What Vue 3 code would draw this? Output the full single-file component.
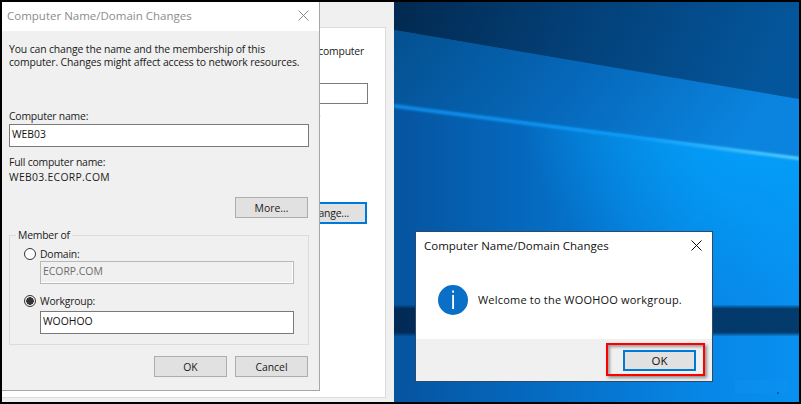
<script setup>
const title = 'Computer Name/Domain Changes'
</script>

<template>
  <div class="page">
    <div class="screen">
      <section class="behind">
        <div class="behind-panel">
          <p class="behind-text">computer</p>
          <div class="behind-input"></div>
          <span class="behind-dot">.</span>
          <button class="change-btn">Change...</button>
        </div>
      </section>

      <svg class="wall" viewBox="0 0 405 400" preserveAspectRatio="none" aria-hidden="true">
        <defs>
          <linearGradient id="gTop" x1="0" y1="0" x2="1" y2="0.1">
            <stop offset="0" stop-color="#02294f" />
            <stop offset="0.45" stop-color="#033f76" />
            <stop offset="1" stop-color="#04569c" />
          </linearGradient>
          <linearGradient id="gMid" x1="0" y1="0" x2="1" y2="0.25">
            <stop offset="0" stop-color="#04508f" />
            <stop offset="0.5" stop-color="#0667b9" />
            <stop offset="1" stop-color="#0a84de" />
          </linearGradient>
          <linearGradient id="gLow" x1="0" y1="0" x2="1" y2="0">
            <stop offset="0" stop-color="#05549f" />
            <stop offset="0.35" stop-color="#056ac0" />
            <stop offset="0.75" stop-color="#0786e6" />
            <stop offset="1" stop-color="#0890f0" />
          </linearGradient>
          <linearGradient id="gLine" x1="0" y1="0" x2="1" y2="0">
            <stop offset="0" stop-color="#1189e6" />
            <stop offset="0.6" stop-color="#0c9af8" />
            <stop offset="1" stop-color="#5fd0ff" />
          </linearGradient>
          <radialGradient id="gGlow" cx="0.85" cy="0.2" r="0.55">
            <stop offset="0" stop-color="#00a8ff" stop-opacity="0.9" />
            <stop offset="1" stop-color="#00a8ff" stop-opacity="0" />
          </radialGradient>
          <linearGradient id="gBand" x1="0" y1="0" x2="0" y2="1">
            <stop offset="0" stop-color="#011a3a" stop-opacity="0.1" />
            <stop offset="0.12" stop-color="#011a3a" stop-opacity="0.72" />
            <stop offset="0.88" stop-color="#011a3a" stop-opacity="0.72" />
            <stop offset="1" stop-color="#011a3a" stop-opacity="0.1" />
          </linearGradient>
          <filter id="soft"><feGaussianBlur stdDeviation="0.8" /></filter>
        </defs>
        <rect width="405" height="400" fill="url(#gLow)" />
        <rect width="405" height="400" fill="url(#gGlow)" />
        <polygon points="0,0 405,0 405,98 0,28" fill="url(#gTop)" />
        <polygon points="0,28 405,97 405,155 0,102" fill="url(#gMid)" />
        <polygon points="0,102 405,155 405,158 0,106" fill="url(#gLine)" filter="url(#soft)" />
        <rect x="0" y="303" width="405" height="31" fill="url(#gBand)" />
        <rect x="341" y="378" width="53" height="13" fill="#1a9af5" opacity="0.2" />
        <rect x="383" y="390" width="2" height="2" fill="#0a5ea8" />
      </svg>

      <section class="dialog-main">
        <header class="titlebar">
          <span class="title-muted">{{ title }}</span>
          <svg class="close" viewBox="0 0 11 11"><path d="M.5.5l10 10M10.500.5l-10 10" stroke="#8a8a8a" fill="none" /></svg>
        </header>
        <div class="main-body">
          <p class="intro">You can change the name and the membership of this<br />computer. Changes might affect access to network resources.</p>
          <label class="name-label">Computer name:</label>
          <div class="field name-field">WEB03</div>
          <p class="full-label">Full computer name:</p>
          <p class="full-value">WEB03.ECORP.COM</p>
          <div class="more-row"><button class="btn">More...</button></div>
          <fieldset class="group">
            <legend>Member of</legend>
            <div class="radio-row">
              <span class="radio"></span><span>Domain:</span>
            </div>
            <div class="field disabled">ECORP.COM</div>
            <div class="radio-row second">
              <span class="radio checked"></span><span>Workgroup:</span>
            </div>
            <div class="field">WOOHOO</div>
          </fieldset>
          <div class="actions">
            <button class="btn">OK</button>
            <button class="btn">Cancel</button>
          </div>
        </div>
      </section>

      <section class="dialog-msg">
        <header class="msg-title">
          <span>{{ title }}</span>
          <svg class="close" viewBox="0 0 11 11"><path d="M.5.5l10 10M10.500.5l-10 10" stroke="#111" fill="none" /></svg>
        </header>
        <div class="msg-body">
          <svg class="info" viewBox="0 0 30 30">
            <circle cx="15" cy="15" r="15" fill="#0a6fc6" />
            <rect x="14.200" y="5.500" width="1.800" height="2.200" fill="#fff" />
            <rect x="14.200" y="10" width="1.800" height="14" fill="#fff" />
          </svg>
          <span class="msg-text">Welcome to the WOOHOO workgroup.</span>
        </div>
        <footer class="msg-foot">
          <button class="btn primary">OK</button>
        </footer>
      </section>

      <div class="callout"></div>
    </div>
  </div>
</template>

<style>
html, body { margin: 0; background: #000; }
</style>

<style scoped>
.page {
  width: 801px;
  height: 404px;
  padding: 2px;
  box-sizing: border-box;
  background: #000;
  overflow: hidden;
}
.screen {
  position: relative;
  display: flex;
  width: 797px;
  height: 400px;
  overflow: hidden;
  font-family: "Open Sans", "Noto Sans", sans-serif;
  font-size: 10.400px;
  letter-spacing: -0.2px;
  color: #1a1a1a;
}
p { margin: 0; }
.behind {
  width: 392px;
  height: 100%;
  flex: none;
  background: #f0f0f0;
  padding: 25px 8px 4px 0;
  box-sizing: border-box;
}
.behind-panel {
  position: relative;
  height: 100%;
  box-sizing: border-box;
  background: #fff;
  border: 1px solid #dcdcdc;
  border-left: 0;
}
.behind-text {
  text-align: right;
  padding: 16px 21px 0 0;
  line-height: 15px;
}
.behind-input {
  height: 19px;
  margin: 24px 17px 0 200px;
  border: 1px solid #7a7a7a;
}
.behind-dot {
  display: block;
  margin: 3px 0 0 316px;
  line-height: 12px;
}
.change-btn {
  position: absolute;
  left: 286px;
  top: 174px;
  width: 79px;
  height: 22px;
  box-sizing: border-box;
  border: 2px solid #0078d7;
  background: #e1e1e1;
  font: inherit;
  letter-spacing: inherit;
  color: #1a1a1a;
  padding: 0;
}
.wall {
  flex: 1;
  height: 400px;
  display: block;
}
.dialog-main {
  position: absolute;
  left: 0;
  top: 0;
  width: 318px;
  height: 389px;
  box-sizing: border-box;
  background: #f0f0f0;
  border-right: 1px solid #a6a6a6;
  border-bottom: 1px solid #a6a6a6;
}
.titlebar {
  height: 29px;
  box-sizing: border-box;
  background: #fff;
  display: flex;
  align-items: center;
  justify-content: space-between;
  padding: 0 10px 2px 5px;
}
.title-muted {
  font-size: 11.500px;
  letter-spacing: 0;
  color: #8c8c8c;
}
.close { width: 11px; height: 11px; display: block; }
.main-body { padding: 12px 10px 0 7px; }
.intro { line-height: 13px; white-space: nowrap; letter-spacing: -0.12px; }
.name-label {
  display: block;
  margin-top: 40px;
  line-height: 15px;
}
.field {
  box-sizing: border-box;
  height: 23px;
  border: 1px solid #7a7a7a;
  background: #fff;
  padding-left: 2px;
  line-height: 19px;
  letter-spacing: 0;
  color: #111;
}
.full-label { margin-top: 8px; line-height: 15px; }
.full-value { line-height: 15px; letter-spacing: 0.3px; }
.more-row {
  display: flex;
  justify-content: flex-end;
  margin-top: 12px;
  padding-right: 1px;
}
.btn {
  width: 73px;
  height: 21px;
  box-sizing: border-box;
  border: 1px solid #adadad;
  background: #e1e1e1;
  font: inherit;
  letter-spacing: 0;
  color: #1a1a1a;
  padding: 0;
}
.group {
  margin: 11px 0 0;
  padding: 5px 14px 10px 12px;
  height: 116px;
  box-sizing: border-box;
  border: 1px solid #dcdcdc;
  min-width: 0;
}
.group legend {
  padding: 0 2px;
  margin-left: -6px;
  line-height: 13px;
}
.radio-row {
  display: flex;
  align-items: center;
  gap: 4px;
  height: 14px;
  margin-left: 2px;
}
.radio-row.second { margin-top: 10px; }
.radio {
  width: 12px;
  height: 12px;
  box-sizing: border-box;
  border: 1px solid #333;
  border-radius: 50%;
  background: #fff;
  flex: none;
}
.radio.checked {
  background: radial-gradient(circle, #333 0 3.500px, #f0f0f0 4px);
}
.field.disabled {
  border-color: #b9b9b9;
  background: #f0f0f0;
  color: #6d6d6d;
  box-shadow: inset -1px -1px 0 #fff;
}
.radio-row + .field { margin: 0 0 0 18px; }
.radio-row.second + .field { margin-top: 3px; }
.actions {
  display: flex;
  justify-content: flex-end;
  gap: 8px;
  margin-top: 11px;
  padding-right: 1px;
}
.dialog-msg {
  position: absolute;
  left: 413px;
  top: 229px;
  width: 298px;
  height: 151px;
  box-sizing: border-box;
  border: 1px solid #2e4a66;
  background: #fff;
  display: flex;
  flex-direction: column;
  letter-spacing: 0;
}
.msg-title {
  display: flex;
  align-items: center;
  justify-content: space-between;
  height: 28px;
  box-sizing: border-box;
  padding: 0 10px 2px 8px;
  font-size: 11.500px;
  color: #111;
}
.msg-body {
  flex: 1;
  display: flex;
  align-items: center;
  gap: 10px;
  padding-left: 22px;
  color: #111;
}
.info { width: 30px; height: 30px; flex: none; }
.msg-text { font-size: 11px; letter-spacing: 0.2px; }
.msg-foot {
  height: 42px;
  background: #f0f0f0;
  display: flex;
  justify-content: flex-end;
  padding: 11px 16px 0 0;
  box-sizing: border-box;
}
.btn.primary {
  border: 2px solid #0078d7;
  font-size: 11.500px;
  color: #111;
}
.callout {
  position: absolute;
  left: 604px;
  top: 341px;
  width: 99px;
  height: 33px;
  box-sizing: border-box;
  border: 2px solid #f00;
  box-shadow: 2px 2px 3px rgba(0, 0, 0, 0.4), inset 2px 2px 3px rgba(0, 0, 0, 0.35);
}
</style>
